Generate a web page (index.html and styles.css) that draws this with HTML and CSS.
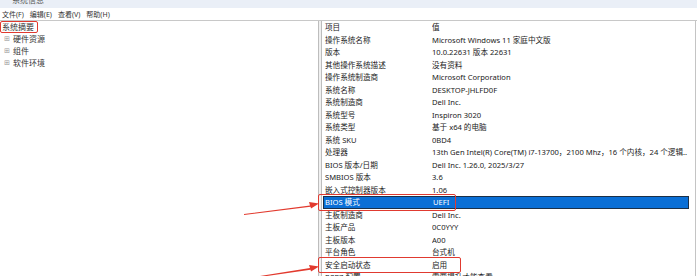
FILE: index.html
```html
<!DOCTYPE html>
<html lang="zh">
<head>
<meta charset="utf-8">
<link rel="stylesheet" href="styles.css">
</head>
<body>
<div class="window">
  <div class="titlebar"><span class="title">系统信息</span></div>
  <div class="menubar">
    <span class="menu">文件(F)</span>
    <span class="menu">编辑(E)</span>
    <span class="menu">查看(V)</span>
    <span class="menu">帮助(H)</span>
  </div>
  <div class="main">
    <div class="tree">
      <div class="node root"><span class="hl">系统摘要</span></div>
      <div class="node"><span class="plus">⊞</span>硬件资源</div>
      <div class="node"><span class="plus">⊞</span>组件</div>
      <div class="node"><span class="plus">⊞</span>软件环境</div>
    </div>
    <div class="split"></div>
    <div class="list">
      <div class="row"><span class="k">项目</span><span class="v">值</span></div>
      <div class="row"><span class="k">操作系统名称</span><span class="v">Microsoft Windows 11 家庭中文版</span></div>
      <div class="row"><span class="k">版本</span><span class="v">10.0.22631 版本 22631</span></div>
      <div class="row"><span class="k">其他操作系统描述</span><span class="v">没有资料</span></div>
      <div class="row"><span class="k">操作系统制造商</span><span class="v">Microsoft Corporation</span></div>
      <div class="row"><span class="k">系统名称</span><span class="v">DESKTOP-JHLFD0F</span></div>
      <div class="row"><span class="k">系统制造商</span><span class="v">Dell Inc.</span></div>
      <div class="row"><span class="k">系统型号</span><span class="v">Inspiron 3020</span></div>
      <div class="row"><span class="k">系统类型</span><span class="v">基于 x64 的电脑</span></div>
      <div class="row"><span class="k">系统 SKU</span><span class="v">0BD4</span></div>
      <div class="row"><span class="k">处理器</span><span class="v">13th Gen Intel(R) Core(TM) i7-13700，2100 Mhz，16 个内核，24 个逻辑..</span></div>
      <div class="row"><span class="k">BIOS 版本/日期</span><span class="v">Dell Inc. 1.26.0, 2025/3/27</span></div>
      <div class="row"><span class="k">SMBIOS 版本</span><span class="v">3.6</span></div>
      <div class="row"><span class="k">嵌入式控制器版本</span><span class="v">1.06</span></div>
      <div class="row selected"><span class="k">BIOS 模式</span><span class="v">UEFI</span></div>
      <div class="row"><span class="k">主板制造商</span><span class="v">Dell Inc.</span></div>
      <div class="row"><span class="k">主板产品</span><span class="v">0C0YYY</span></div>
      <div class="row"><span class="k">主板版本</span><span class="v">A00</span></div>
      <div class="row"><span class="k">平台角色</span><span class="v">台式机</span></div>
      <div class="row"><span class="k">安全启动状态</span><span class="v">启用</span></div>
      <div class="row"><span class="k">PCR7 配置</span><span class="v">需要提升才能查看</span></div>
    </div>
    <div class="scroll"></div>
  </div>
  <div class="box box1"></div>
  <div class="box box2"></div>
  <svg class="arrows" width="697" height="276" viewBox="0 0 697 276">
    <polygon points="244,214 310,205.5 309,202 319,203.5 311,208.5 310.5,206.8 244,215" fill="#e23a2e"/>
    <polygon points="260,276 310,268 309,265 319,266.5 311,271.5 310.5,269.8 260,277" fill="#e23a2e"/>
  </svg>
</div>
</body>
</html>
```
FILE: styles.css
```css
* { box-sizing: border-box; }
html, body { margin: 0; padding: 0; background: #fff; }
body {
  font-family: "Noto Sans", "Noto Sans CJK SC", sans-serif;
  color: #222;
  width: 697px;
  height: 276px;
  overflow: hidden;
}
.window { position: relative; width: 697px; height: 276px; overflow: hidden; }
.titlebar {
  height: 8px;
  background: #eaeff7;
  overflow: hidden;
  padding-left: 12px;
}
.title {
  display: block;
  font-size: 8px;
  line-height: 8px;
  margin-top: -4px;
  color: #555;
}
.menubar {
  height: 13px;
  display: flex;
  gap: 6px;
  padding-left: 2px;
  align-items: center;
  font-size: 7px;
  color: #333;
  border-bottom: 1px solid #c8c8c8;
}
.main { display: flex; height: 255px; }
.tree {
  width: 319px;
  border-right: 1px solid #bdbdbd;
  font-size: 8px;
  color: #333;
}
.node {
  height: 12px;
  line-height: 12px;
  padding-left: 4px;
  display: flex;
  align-items: center;
}
.node.root { padding-left: 2px; }
.plus { font-size: 7px; color: #999; width: 9px; }
.split { width: 3px; background: #f0f0f0; border-right: 1px solid #bdbdbd; }
.list {
  width: 367px;
  font-size: 7.6px;
  padding-left: 1px;
}
.row {
  display: flex;
  height: 12.5px;
  line-height: 12.5px;
  white-space: nowrap;
}
.k { width: 109px; padding-left: 2px; flex: none; }
.v { flex: 1; overflow: hidden; text-overflow: clip; }
.row.selected {
  background: #0a6fd6;
  color: #fff;
  border: 1px solid #1b3048;
  line-height: 10.5px;
}
.row.selected .k { padding-left: 1px; }
.scroll { width: 7px; border-right: 1px solid #c4c4c4; }
.box {
  position: absolute;
  border: 1.5px solid #e03a30;
  border-radius: 2px;
}
.box1 { left: 318px; top: 194px; width: 138px; height: 17px; }
.box2 { left: 318px; top: 257px; width: 143px; height: 16px; }
.hl {
  border: 1.5px solid #e03a30;
  border-radius: 2px;
  padding: 0 3px 0 1px;
  line-height: 10px;
  margin-left: -2px;
}
.arrows { position: absolute; left: 0; top: 0; pointer-events: none; }
```
